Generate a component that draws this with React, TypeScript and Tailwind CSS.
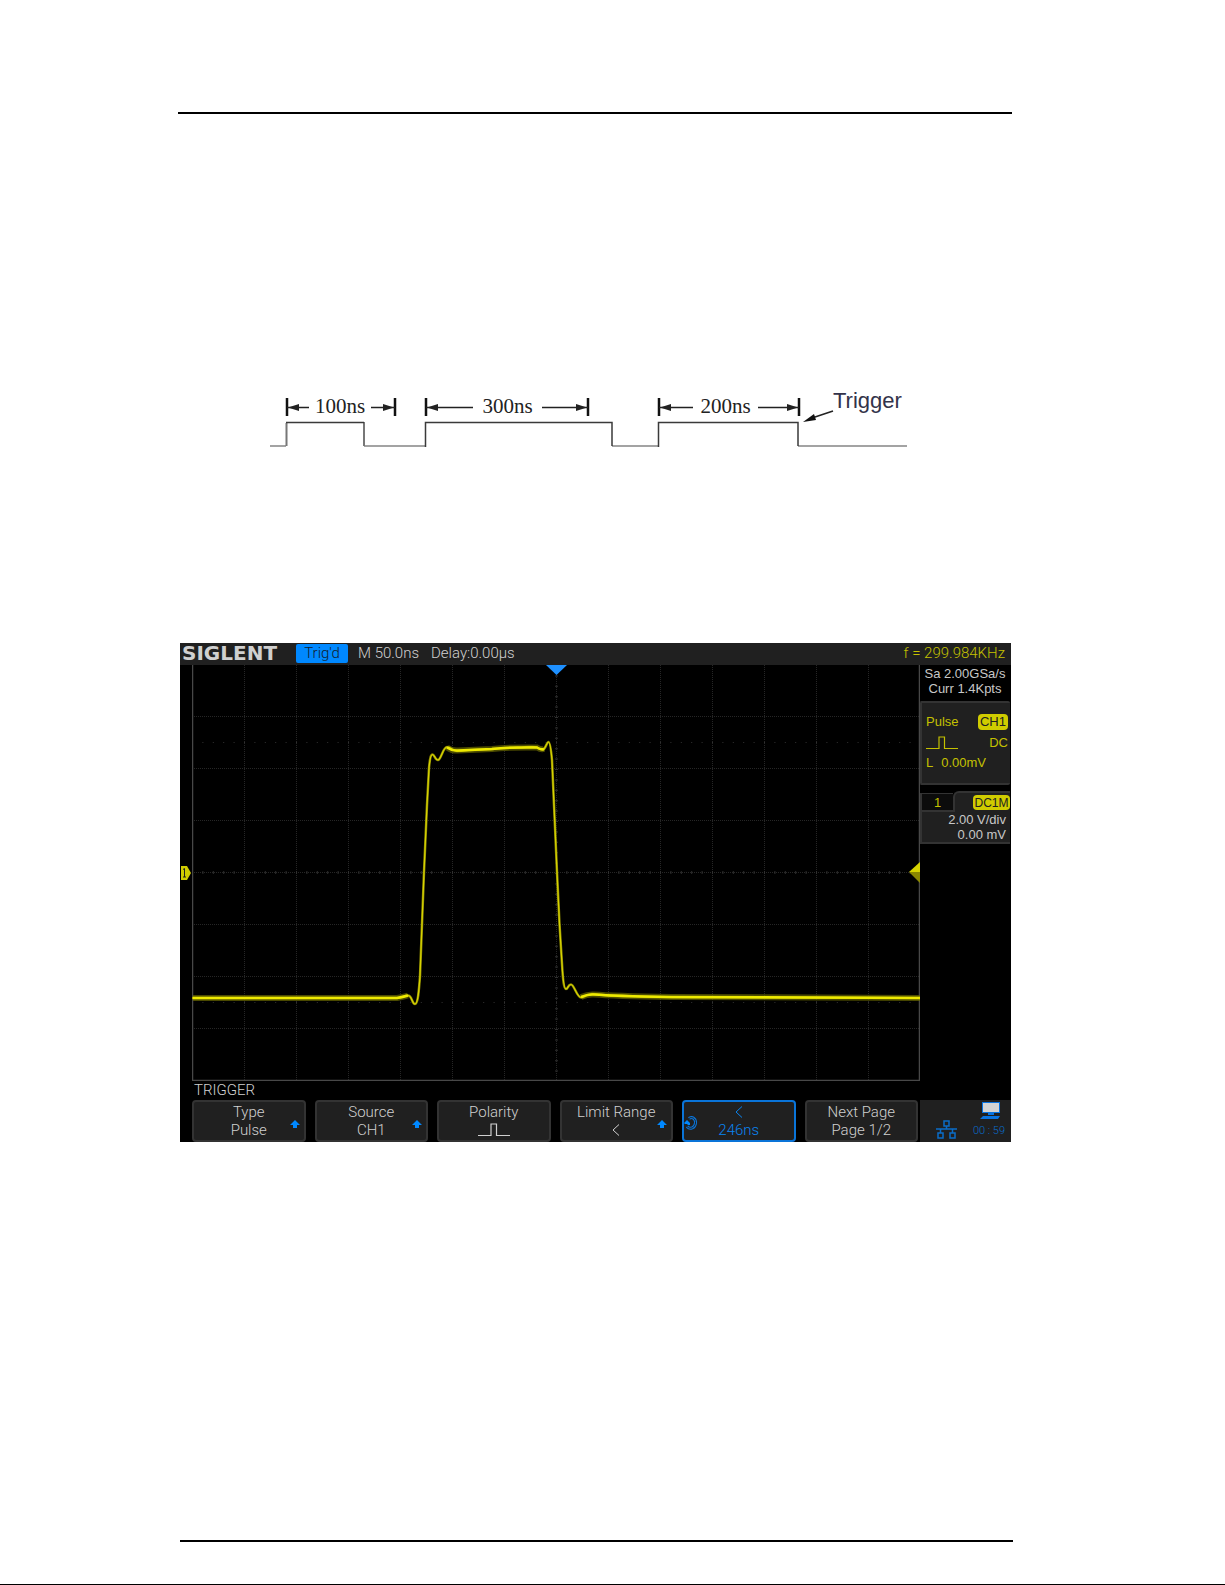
const WAVE =
  "M0 333 L205 333 C210 333 212 330.500 216 330.500 C220 330.500 220 339 223 339 C226 339 227 325 228 311 L230 259 L232 207 L235 140 L237 103 C238 92 239 89.500 240.500 89.500 C242.500 89.500 243 95 246 95 C249 95 251 82 255 82 C259 82 260 86 265 86 C273 86 281 84.500 293 84.500 C305 84 317 82 329 82.500 C337 82.500 341 81 345 82.500 C348 84 350 86 352 84 C354 82 355 77 356.500 77 C358 77 359 84 360 95 L362 140 L365 207 L367.500 259 L370 299 C371 316 372 324 374 324 C376 324 376 319.500 379 319.500 C382 319.500 385 332.500 389 332.500 C392 332.500 395 329 400 329 C407 329 414 331 426 331 C456 332 491 332.500 531 332.500 L728 333";

// flat parts of the trace, where it is brightest
const PLATEAUS =
  "M1 333H205Q211 332 216 330.500M255 82.500Q260 86 266 85.500Q290 84.500 300 84Q318 82 345 82.500Q349 85 352 84M389 332Q396 329 402 329.500Q420 331 480 332L728 333";

const range = (n: number) => Array.from({ length: n }, (_, i) => i);

function PulseIcon({ className }: { className?: string }) {
  return (
    <svg width="32" height="14" viewBox="0 0 32 14" fill="none" stroke="currentColor" strokeWidth="1.200" className={className}>
      <path d="M0 12.500H13V1H18.500V12.500H32" />
    </svg>
  );
}

function UpArrow() {
  return (
    <svg width="10" height="8" viewBox="0 0 10 8" fill="#0088ff">
      <path d="M5 0L10 5H7V8H3V5H0Z" />
    </svg>
  );
}

type DimensionProps = { from: number; to: number; left: number; right: number; label: string };

function Dimension({ from, to, left, right, label }: DimensionProps) {
  return (
    <g>
      <path d={`M${from} 10V28M${to} 10V28`} stroke="#111" strokeWidth="2.500" />
      <path d={`M${from} 19.500H${left}M${right} 19.500H${to}`} stroke="#222" strokeWidth="1.500" />
      <path d={`M${from + 1} 19.500L${from + 12} 16V23ZM${to - 1} 19.500L${to - 12} 16V23Z`} fill="#222" />
      <text x={(left + right) / 2} y="25" fontSize="21" fill="#222" textAnchor="middle">
        {label}
      </text>
    </g>
  );
}

function TimingDiagram() {
  return (
    <svg width="650" height="64" viewBox="0 0 650 64" fill="none" className="font-['Liberation_Serif',serif]">
      <path d="M10 58H26M104 58H165M352 58H399M538 58H647" stroke="#a3a3a3" strokeWidth="2" />
      <path d="M26.500 58V35M104 34V58" stroke="#777" strokeWidth="2" />
      <path d="M26 34.500H104M165.500 59V34.500H352V58M398.500 59V34.500H538V58" stroke="#3a3a3a" strokeWidth="1.500" />
      <Dimension from={27} to={135} left={49} right={111} label="100ns" />
      <Dimension from={166} to={328} left={213} right={282} label="300ns" />
      <Dimension from={399} to={539} left={433} right={498} label="200ns" />
      <text x="573" y="20" fontSize="22" fill="#33334a" className="font-['Liberation_Sans',sans-serif]">
        Trigger
      </text>
      <path d="M573 23L552 30" stroke="#222" strokeWidth="1.500" />
      <path d="M543 34L554 26L556 32Z" fill="#111" />
    </svg>
  );
}

function Plot() {
  return (
    <svg viewBox="0 0 728 416" className="block h-auto w-full" fill="none">
      {/* graticule */}
      <g stroke="#262626" strokeDasharray="1 1">
        {range(13).map((i) => (
          <path key={i} d={`M${(i + 1) * 52 + 0.5} 0V416`} />
        ))}
        {range(7).map((i) => (
          <path key={i} d={`M0 ${(i + 1) * 52 - 0.5}H728`} />
        ))}
      </g>
      <g stroke="#303030">
        <path d="M0 207.500H728" strokeWidth="3" strokeDasharray="1 9.400" />
        <path d="M364.500 0V416" strokeWidth="3" strokeDasharray="1 9.400" />
        <path d="M0 77.500H728M0 337.500H728" strokeDasharray="1 9.400" />
      </g>
      <path d="M0.500 0V415.500H727.500V0" stroke="#484848" strokeWidth="1.500" />

      {/* trace */}
      <path d={PLATEAUS} stroke="#6b6900" strokeWidth="6" opacity="0.700" />
      <path d={WAVE} stroke="#8a8700" strokeWidth="2.500" strokeLinejoin="round" />
      <path d={WAVE} stroke="#d8d400" strokeWidth="1.200" strokeLinejoin="round" />
      <path d={PLATEAUS} stroke="#eeea00" strokeWidth="2.500" />

      {/* trigger position and level */}
      <path d="M354 0H375L364.500 10Z" fill="#1e90ff" />
      <path d="M728 197V207H717Z" fill="#d6d200" />
      <path d="M728 218V207H717Z" fill="#8a8700" />
    </svg>
  );
}

function TopBar() {
  return (
    <header className="flex h-[22px] items-center bg-[#202020] pr-1.5 pb-0.5 pl-0.5 font-['Roboto',sans-serif] text-[15px] leading-none font-light text-[#d0d0d0]">
      <h1 className="w-[114px] font-['DejaVu_Sans',sans-serif] text-[20px] leading-none font-bold">SIGLENT</h1>
      <span className="flex h-[19px] w-[52px] items-center justify-center rounded-xs bg-[#0088ff] text-[#102030]">Trig'd</span>
      <span className="ml-2.5 w-[73px]">M 50.0ns</span>
      <span>Delay:0.00µs</span>
      <span className="ml-auto text-[#c4c100]">f = 299.984KHz</span>
    </header>
  );
}

function Sidebar() {
  return (
    <aside className="w-[91px] shrink-0 pr-px text-[13px] leading-none">
      <div className="flex h-9 flex-col justify-center gap-0.5 pb-1 text-center text-[#c8c8c8]">
        <p>Sa 2.00GSa/s</p>
        <p>Curr 1.4Kpts</p>
      </div>

      <section className="flex h-[84px] flex-col justify-center gap-1.5 rounded-xs border-2 border-r-0 border-[#333] bg-[#202020] pr-0.5 pb-1 pl-1 text-[#c4c100]">
        <div className="flex items-center justify-between">
          <span>Pulse</span>
          <span className="flex h-4 w-[30px] items-center justify-center rounded-sm bg-[#d0cc00] text-[#202020]">CH1</span>
        </div>
        <div className="flex items-center justify-between">
          <PulseIcon />
          <span>DC</span>
        </div>
        <p className="flex gap-2">
          <span>L</span>
          <span>0.00mV</span>
        </p>
      </section>

      <section className="mt-1.5 text-[#c8c8c8]">
        <div className="flex h-[21px] items-end">
          <span className="flex h-[19px] w-[33px] items-center justify-center border-t border-b-2 border-l-2 border-[#333] bg-[#0c0c0c] text-[#c4c100]">
            1
          </span>
          <span className="flex h-full flex-1 items-center justify-end rounded-tl-md border-t-2 border-l-2 border-[#333] bg-[#202020]">
            <span className="flex h-[15px] w-[37px] items-center justify-center rounded-sm bg-[#d0cc00] text-xs leading-none text-[#202020]">
              DC1M
            </span>
          </span>
        </div>
        <div className="flex flex-col gap-0.5 border-b-2 border-l-2 border-[#333] bg-[#202020] pt-px pr-1 pb-px text-right">
          <p>2.00 V/div</p>
          <p>0.00 mV</p>
        </div>
      </section>
    </aside>
  );
}

type KeyProps = { title: React.ReactNode; value: React.ReactNode; arrow?: boolean; active?: boolean };

function SoftKey({ title, value, arrow, active }: KeyProps) {
  return (
    <button
      type="button"
      className={`relative flex h-[42px] flex-1 flex-col items-center justify-center rounded-sm border-2 bg-[#202020] text-[15px] leading-[18px] ${
        active ? "border-[#0a74d8] text-[#0a84f0]" : "border-[#333] text-[#d0d0d0]"
      }`}
    >
      <span className="flex h-[18px] items-center">{title}</span>
      <span className="flex h-[18px] items-center">{value}</span>
      {arrow && (
        <span className="absolute right-1 bottom-3">
          <UpArrow />
        </span>
      )}
      {active && (
        <svg width="13" height="14" viewBox="0 0 13 14" fill="none" className="absolute bottom-2.5 left-0">
          <path d="M5 2.500C8 0 12 3 11.500 7C11 12 6 14 3 10.500" stroke="#0a74d8" strokeWidth="3" />
          <path d="M5 2.500C8 0 12 3 11.500 7C11 12 6 14 3 10.500" stroke="#202020" />
          <path d="M0 7L3 4L6 7V9H4L3 8L1 8Z" fill="#0088ff" />
        </svg>
      )}
    </button>
  );
}

function Chevron() {
  return (
    <svg width="8" height="12" viewBox="0 0 8 12" fill="none" stroke="currentColor">
      <path d="M7 0.500L1 6L7 11.500" />
    </svg>
  );
}

function Status() {
  return (
    <div className="flex w-[91px] shrink-0 flex-col bg-[#202020] pr-1.5 pl-4 text-[#0a6cc8]">
      <svg width="21" height="18" viewBox="0 0 21 18" className="mt-0.5 mr-1 self-end">
        <path d="M2 0H20V11H2Z" fill="#0a74e0" />
        <path d="M3 1H19V10H3Z" fill="#d4d4d4" />
        <path d="M8 11H14V13H8ZM3 14H20L18 17H0Z" fill="#0a74e0" />
      </svg>
      <div className="flex items-center justify-between">
        <svg width="21" height="20" viewBox="0 0 21 20" fill="none" stroke="currentColor" strokeWidth="1.500">
          <path d="M8 1H13V6H8ZM2 13H7V18H2ZM14 13H19V18H14ZM0 9H21M10.500 6V9M4.500 9V13M16.500 9V13" />
        </svg>
        <time className="text-[11px] leading-none">00 : 59</time>
      </div>
    </div>
  );
}

function Scope() {
  return (
    <section className="bg-black font-['Liberation_Sans',sans-serif]">
      <TopBar />
      <div className="flex">
        <div className="flex w-3 shrink-0 items-center">
          <svg width="11" height="14" viewBox="0 0 11 14">
            <path d="M1 0H7L11 7L7 14H1Z" fill="#d0cc00" />
            <path d="M3 3.500L4.500 2.500V11M3 11H6" stroke="#202020" fill="none" />
          </svg>
        </div>
        <div className="min-w-0 flex-1">
          <Plot />
        </div>
        <Sidebar />
      </div>
      <div className="font-['Roboto',sans-serif] font-light">
        <h2 className="pl-3.5 text-[15px] leading-[19px] text-[#d0d0d0]">TRIGGER</h2>
        <div className="flex pl-3">
          <div className="flex flex-1 gap-[9px] pr-0.5">
            <SoftKey title="Type" value="Pulse" arrow />
            <SoftKey title="Source" value="CH1" arrow />
            <SoftKey title="Polarity" value={<PulseIcon />} />
            <SoftKey title="Limit Range" value={<Chevron />} arrow />
            <SoftKey title={<Chevron />} value="246ns" active />
            <SoftKey title="Next Page" value="Page 1/2" />
          </div>
          <Status />
        </div>
      </div>
    </section>
  );
}

export default function App() {
  return (
    <main className="flex min-h-screen flex-col border-b border-black bg-white pt-28">
      <hr className="mr-[213px] ml-[178px] border-t-2 border-black" />
      <div className="mt-[274px] flex pl-[260px]">
        <TimingDiagram />
      </div>
      <div className="mt-[191px] mr-[214px] ml-[180px]">
        <Scope />
      </div>
      <hr className="mt-auto mr-[212px] mb-[42px] ml-[180px] border-t-2 border-black" />
    </main>
  );
}
